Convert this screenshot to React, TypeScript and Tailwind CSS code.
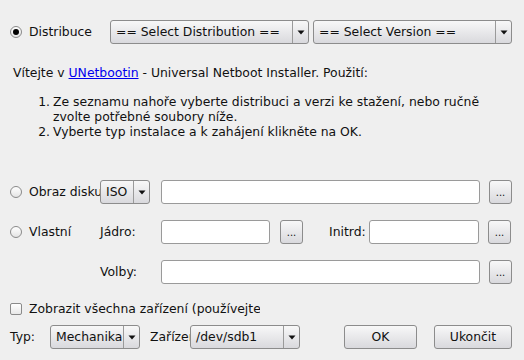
import React from "react";

function Radio({ checked = false }: { checked?: boolean }) {
  return (
    <span className="flex h-[12px] w-[12px] shrink-0 items-center justify-center rounded-full border border-[#8a8a8a] bg-gradient-to-b from-[#ffffff] to-[#e4e4e4]">
      {checked && <span className="h-[6px] w-[6px] rounded-full bg-black" />}
    </span>
  );
}

function Arrow() {
  return (
    <svg width="8" height="5" viewBox="0 0 8 5">
      <path d="M0.5 0.5 L7.5 0.5 L4 4.5 Z" fill="#111" />
    </svg>
  );
}

function Combo({ label, width }: { label: string; width: string }) {
  return (
    <div
      className={`flex h-[24px] shrink-0 overflow-hidden rounded-[3px] border border-[#8c8c8c] bg-gradient-to-b from-[#f8f8f8] to-[#d9d9dd] ${width}`}
    >
      <div className="min-w-0 flex-1 overflow-hidden whitespace-nowrap pl-[5px] leading-[22px]">{label}</div>
      <div className="flex w-[16px] shrink-0 items-center justify-center border-l border-[#9a9a9a]">
        <Arrow />
      </div>
    </div>
  );
}

function Field({ width }: { width: string }) {
  return <div className={`h-[24px] shrink-0 rounded-[3px] border border-[#9a9a9a] bg-white ${width}`} />;
}

function Dots() {
  return (
    <div className="flex h-[24px] w-[23px] shrink-0 items-end justify-center rounded-[3px] border border-[#8c8c8c] bg-gradient-to-b from-[#f8f8f8] to-[#d9d9dd] pb-[5px] text-[10px] leading-[10px]">
      ...
    </div>
  );
}

function Button({ label, width }: { label: string; width: string }) {
  return (
    <div
      className={`flex h-[24px] shrink-0 items-center justify-center rounded-[3px] border border-[#8c8c8c] bg-gradient-to-b from-[#f8f8f8] to-[#d9d9dd] ${width}`}
    >
      {label}
    </div>
  );
}

export default function App() {
  return (
    <div
      className="h-[360px] w-[524px] overflow-hidden bg-[#efefef] pl-[10px] pt-[20px] text-[12.4px] text-[#111]"
      style={{ fontFamily: "'DejaVu Sans', sans-serif" }}
    >
      <div className="flex h-[24px] items-center">
        <div className="flex w-[100px] items-center gap-[7px]">
          <Radio checked />
          <span>Distribuce</span>
        </div>
        <Combo label="== Select Distribution ==" width="w-[199px]" />
        <div className="w-[4px]" />
        <Combo label="== Select Version ==" width="w-[199px]" />
      </div>

      <p className="mt-[21px] pl-[3px] leading-[15px]">
        Vítejte v <span className="text-[#0000ee] underline">UNetbootin</span> - Universal Netboot Installer. Použití:
      </p>
      <ol className="mt-[14px] leading-[15px]">
        <li className="flex">
          <span className="w-[43px] shrink-0 pr-[3px] text-right">1.</span>
          <span>
            Ze seznamu nahoře vyberte distribuci a verzi ke stažení, nebo ručně
            <br />
            zvolte potřebné soubory níže.
          </span>
        </li>
        <li className="flex">
          <span className="w-[43px] shrink-0 pr-[3px] text-right">2.</span>
          <span>Vyberte typ instalace a k zahájení klikněte na OK.</span>
        </li>
      </ol>

      <div className="mt-[41px] flex h-[24px] items-center">
        <div className="flex w-[90px] items-center gap-[7px] overflow-hidden whitespace-nowrap">
          <Radio />
          <span>Obraz disku</span>
        </div>
        <Combo label="ISO" width="w-[50px]" />
        <div className="w-[11px]" />
        <Field width="w-[319px]" />
        <div className="w-[9px]" />
        <Dots />
      </div>

      <div className="mt-[16px] flex h-[24px] items-center">
        <div className="flex w-[90px] items-center gap-[7px]">
          <Radio />
          <span>Vlastní</span>
        </div>
        <span className="w-[61px]">Jádro:</span>
        <Field width="w-[109px]" />
        <div className="w-[10px]" />
        <Dots />
        <div className="w-[26px]" />
        <span className="w-[40px]">Initrd:</span>
        <Field width="w-[110px]" />
        <div className="w-[9px]" />
        <Dots />
      </div>

      <div className="mt-[16px] flex h-[24px] items-center">
        <div className="w-[90px]" />
        <span className="w-[61px]">Volby:</span>
        <Field width="w-[319px]" />
        <div className="w-[9px]" />
        <Dots />
      </div>

      <div className="mt-[18px] flex h-[14px] items-center gap-[7px] whitespace-nowrap">
        <span className="h-[12px] w-[12px] shrink-0 rounded-[2px] border border-[#8a8a8a] bg-gradient-to-b from-[#ffffff] to-[#e8e8e8]" />
        <span className="w-[231px] overflow-hidden">Zobrazit všechna zařízení (používejte s opatrností)</span>
      </div>

      <div className="mt-[9px] flex h-[24px] items-center">
        <span className="w-[40px]">Typ:</span>
        <Combo label="Mechanika USB" width="w-[90px]" />
        <div className="w-[10px]" />
        <span className="w-[40px] overflow-hidden whitespace-nowrap">Zařízení:</span>
        <Combo label="/dev/sdb1" width="w-[110px]" />
        <div className="w-[44px]" />
        <Button label="OK" width="w-[73px]" />
        <div className="w-[17px]" />
        <Button label="Ukončit" width="w-[78px]" />
      </div>
    </div>
  );
}
